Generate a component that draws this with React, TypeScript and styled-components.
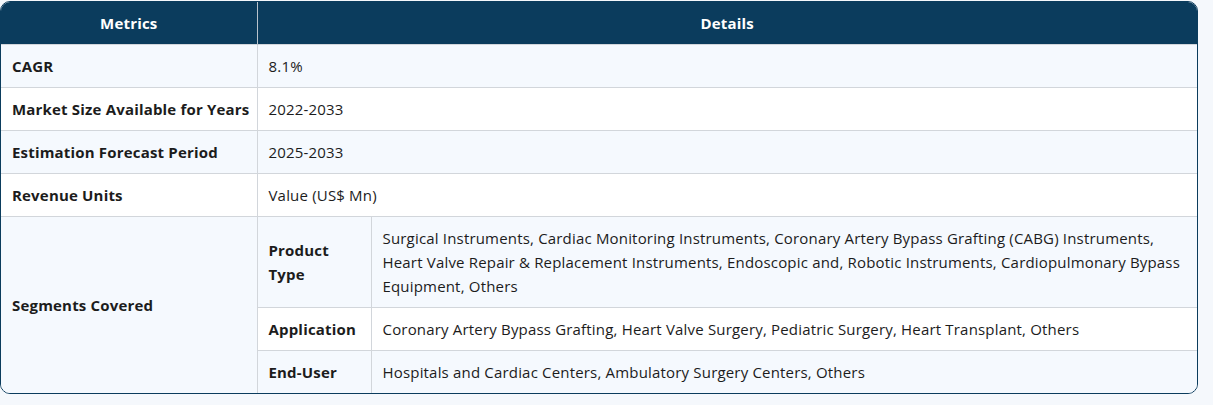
import React from 'react'
import styled, {createGlobalStyle} from 'styled-components'

const GlobalStyle = createGlobalStyle`
    body {
        margin: 0;
        background: #f5f8fc;
        font-family: 'Open Sans', 'Liberation Sans', sans-serif;
    }
`

const Page = styled.div`
    padding: 1px 0 0 0;
    width: 1198px;
`

const TableWrap = styled.div`
    border: 1px solid #0b3c5d;
    border-radius: 10px;
    overflow: hidden;
    background: #ffffff;
`

const Table = styled.table`
    width: 100%;
    border-collapse: collapse;
    table-layout: fixed;
    font-size: 15px;
    line-height: 24px;
    letter-spacing: 0.18px;
    color: #1c1c1c;

    tbody tr:nth-child(odd) {
        background: #f5f9fe;
    }
    tbody tr:nth-child(even) {
        background: #ffffff;
    }
`

const HeadCell = styled.th`
    background: #0b3c5d;
    color: #ffffff;
    font-weight: 700;
    text-align: center;
    padding: 9px 11px;
    border-left: 1px solid #b9c3cc;
    &:first-child {
        border-left: none;
    }
`

const Cell = styled.td<{$label?: boolean}>`
    padding: 9px 11px;
    text-align: left;
    vertical-align: middle;
    font-weight: ${(p) => (p.$label ? 700 : 400)};
    border-top: 1px solid #d2d6db;
    border-left: 1px solid #d2d6db;
    &:first-child {
        border-left: none;
    }
`

const MetricCell = styled(Cell)`
    white-space: nowrap;
    padding-right: 6px;
`

const SubCell = styled(Cell)`
    &:first-child {
        border-left: 1px solid #d2d6db;
    }
`

const rows = [
    {label: 'CAGR', value: '8.1%'},
    {label: 'Market Size Available for Years', value: '2022-2033'},
    {label: 'Estimation Forecast Period', value: '2025-2033'},
    {label: 'Revenue Units', value: 'Value (US$ Mn)'},
]

const segments = [
    {
        label: 'Product Type',
        value: 'Surgical Instruments, Cardiac Monitoring Instruments, Coronary Artery Bypass Grafting (CABG) Instruments, Heart Valve Repair & Replacement Instruments, Endoscopic and, Robotic Instruments, Cardiopulmonary Bypass Equipment, Others',
    },
    {
        label: 'Application',
        value: 'Coronary Artery Bypass Grafting, Heart Valve Surgery, Pediatric Surgery, Heart Transplant, Others',
    },
    {
        label: 'End-User',
        value: 'Hospitals and Cardiac Centers, Ambulatory Surgery Centers, Others',
    },
]

const App: React.FC = () => {
    return (
        <Page>
            <GlobalStyle />
            <TableWrap>
                <Table>
                    <colgroup>
                        <col style={{width: 256}} />
                        <col style={{width: 114}} />
                        <col />
                    </colgroup>
                    <thead>
                        <tr>
                            <HeadCell>Metrics</HeadCell>
                            <HeadCell colSpan={2}>Details</HeadCell>
                        </tr>
                    </thead>
                    <tbody>
                        {rows.map((row) => (
                            <tr key={row.label}>
                                <MetricCell $label>{row.label}</MetricCell>
                                <Cell colSpan={2}>{row.value}</Cell>
                            </tr>
                        ))}
                        {segments.map((seg, i) => (
                            <tr key={seg.label}>
                                {i === 0 && (
                                    <MetricCell $label rowSpan={segments.length}>
                                        Segments Covered
                                    </MetricCell>
                                )}
                                <SubCell $label>{seg.label}</SubCell>
                                <SubCell>{seg.value}</SubCell>
                            </tr>
                        ))}
                    </tbody>
                </Table>
            </TableWrap>
        </Page>
    )
}

export default App
